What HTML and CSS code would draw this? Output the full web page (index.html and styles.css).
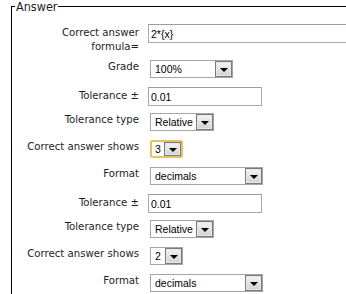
FILE: index.html
```html
<!DOCTYPE html>
<html lang="en">
<head>
  <meta charset="UTF-8">
  <meta name="viewport" content="width=device-width, initial-scale=1.0">
  <title>Answer</title>
  <link rel="stylesheet" href="styles.css">
</head>
<body>

  <fieldset class="answer">
    <legend>Answer</legend>

    <div class="row in first">
      <label class="lbl">Correct answer formula=</label>
      <div class="ctl"><input type="text" class="field formula" value="2*{x}"></div>
    </div>

    <div class="row">
      <label class="lbl">Grade</label>
      <div class="ctl"><div class="dropdown grade"><span class="val">100%</span><span class="btn"></span></div></div>
    </div>

    <div class="row in">
      <label class="lbl">Tolerance ±</label>
      <div class="ctl"><input type="text" class="field tol" value="0.01"></div>
    </div>

    <div class="row">
      <label class="lbl">Tolerance type</label>
      <div class="ctl"><div class="dropdown ttype"><span class="val">Relative</span><span class="btn"></span></div></div>
    </div>

    <div class="row">
      <label class="lbl">Correct answer shows</label>
      <div class="ctl"><div class="dropdown shows focus"><span class="val">3</span><span class="btn"></span></div></div>
    </div>

    <div class="row">
      <label class="lbl">Format</label>
      <div class="ctl"><div class="dropdown fmt"><span class="val">decimals</span><span class="btn"></span></div></div>
    </div>

    <div class="row in">
      <label class="lbl">Tolerance ±</label>
      <div class="ctl"><input type="text" class="field tol" value="0.01"></div>
    </div>

    <div class="row">
      <label class="lbl">Tolerance type</label>
      <div class="ctl"><div class="dropdown ttype"><span class="val">Relative</span><span class="btn"></span></div></div>
    </div>

    <div class="row">
      <label class="lbl">Correct answer shows</label>
      <div class="ctl"><div class="dropdown shows"><span class="val">2</span><span class="btn"></span></div></div>
    </div>

    <div class="row">
      <label class="lbl">Format</label>
      <div class="ctl"><div class="dropdown fmt"><span class="val">decimals</span><span class="btn"></span></div></div>
    </div>
  </fieldset>

</body>
</html>
```

FILE: styles.css
```css
body {
  margin: 0;
  background: #fff;
  font-family: "DejaVu Sans Condensed", "DejaVu Sans", Verdana, sans-serif;
  font-size: 11.3px;
  color: #1e1e1e;
  overflow: hidden;
}
.answer {
  margin: 0 0 0 11px;
  padding: 17px 0 0 13px;
  border: none;
  border-top: 1px solid #000;
  border-left: 1px solid #000;
  position: relative;
  top: 6px;
}
.answer legend {
  position: absolute;
  top: -6px;
  left: 3px;
  padding: 0 1px;
  background: #fff;
  font-size: 12.5px;
  line-height: 12px;
}
.row {
  display: flex;
  align-items: flex-start;
  margin-bottom: 9px;
}
.row.in {
  margin-bottom: 7px;
}
.row.first {
  margin-bottom: 6px;
}
.lbl {
  width: 114px;
  flex: none;
  text-align: right;
  line-height: 14px;
  white-space: nowrap;
}
.in .lbl {
  padding-top: 2px;
}
.first .lbl {
  white-space: normal;
}
.ctl {
  margin-left: 9px;
}
.field {
  display: block;
  box-sizing: border-box;
  height: 19px;
  margin: 0;
  padding: 0 2px;
  border: 1px solid #a9a9a9;
  border-top-color: #9c9c9c;
  font-family: "Liberation Sans", Arial, sans-serif;
  font-size: 10.5px;
  color: #000;
}
.formula {
  width: 220px;
}
.tol {
  width: 114px;
}
.dropdown {
  box-sizing: border-box;
  height: 18px;
  margin-left: 2px;
  display: flex;
  align-items: center;
  border: 1px solid #a5a5a5;
  background: #fff;
  font-family: "Liberation Sans", Arial, sans-serif;
  font-size: 10.5px;
  color: #000;
}
.dropdown .val {
  flex: 1;
  padding-left: 4px;
}
.dropdown .btn {
  box-sizing: border-box;
  width: 17px;
  height: 16px;
  border: 1px solid #7a7a7a;
  box-shadow: inset 0 0 0 1px #e8e8e8;
  background: linear-gradient(#f4f4f4, #d2d2d2);
  position: relative;
}
.dropdown .btn::after {
  content: "";
  position: absolute;
  left: 4px;
  top: 6px;
  border-left: 4px solid transparent;
  border-right: 4px solid transparent;
  border-top: 4px solid #000;
}
.dropdown.focus {
  border: 2px solid #e6c266;
  border-radius: 2px;
}
.dropdown.focus .val {
  padding-left: 3px;
}
.dropdown.focus .btn {
  height: 14px;
}
.dropdown.focus .btn::after {
  top: 5px;
}
.grade {
  width: 83px;
}
.ttype {
  width: 64px;
}
.shows {
  width: 33px;
}
.fmt {
  width: 113px;
}
```
